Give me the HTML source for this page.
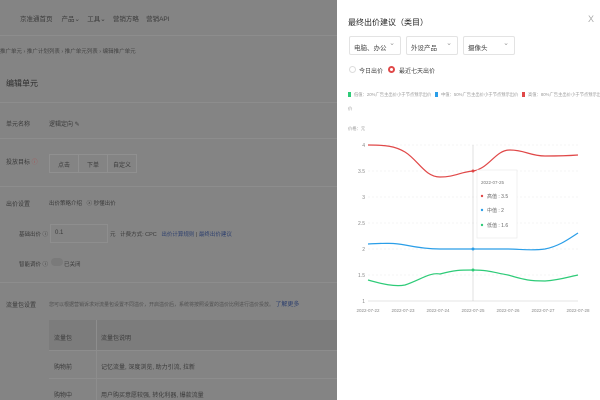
<!DOCTYPE html>
<html><head><meta charset="utf-8"><style>
*{margin:0;padding:0;box-sizing:border-box}
body{width:600px;height:400px;overflow:hidden;position:relative;background:#848484;font-family:"Liberation Sans","Noto Sans CJK SC",sans-serif;font-size:6px;color:#3a3a3a}
.a{position:absolute;white-space:nowrap}
.hl{position:absolute;left:0;width:337px;height:1px;background:#8d8d8d}
.drawer{position:absolute;left:337px;top:0;width:263px;height:400px;background:#fff}
.sel{position:absolute;top:36px;height:19px;border:1px solid #e3e3e3;border-radius:2px;font-size:6.5px;color:#444;padding:5px 0 0 4px}
.sel:after{content:"⌄";position:absolute;right:5px;top:2px;color:#999;font-size:7px}
.lg{font-size:4.3px;color:#999}
</style></head><body>
<div class="a" style="left:20px;top:13px;font-size:6.5px;color:#3b3b3b">京准通首页&nbsp;&nbsp;&nbsp;&nbsp;&nbsp;产品⌄&nbsp;&nbsp;&nbsp;&nbsp;工具⌄&nbsp;&nbsp;&nbsp;&nbsp;营销方略&nbsp;&nbsp;&nbsp;&nbsp;营销API</div>
<div class="hl" style="top:35px"></div>
<div class="a" style="left:0;top:47px;font-size:5.5px;color:#444">推广单元 › 推广计划列表 › 推广单元列表 › 编辑推广单元</div>
<div class="a" style="left:6px;top:78px;font-size:8px;color:#2d2d2d">编辑单元</div>
<div class="hl" style="top:102px"></div>
<div class="a" style="left:6px;top:119px;font-size:6px">单元名称</div>
<div class="a" style="left:49px;top:119px;font-size:6px">逻辑定向 ✎</div>
<div class="hl" style="top:138px"></div>
<div class="a" style="left:6px;top:157px;font-size:6px">投放目标 <span style="color:#a55">ⓘ</span></div>
<div class="a" style="left:49px;top:154px;width:88px;height:19px;border:1px solid #909090;font-size:6px;display:flex"><span style="flex:1;text-align:center;padding-top:5px;border-right:1px solid #909090">点击</span><span style="flex:1;text-align:center;padding-top:5px;border-right:1px solid #909090">下单</span><span style="flex:1;text-align:center;padding-top:5px">自定义</span></div>
<div class="hl" style="top:186px"></div>
<div class="a" style="left:6px;top:199px;font-size:6px">出价设置</div>
<div class="a" style="left:49px;top:199px;font-size:5.5px">出价策略介绍&nbsp;&nbsp;&nbsp;ⓧ 秒懂出价</div>
<div class="a" style="left:19px;top:230px;font-size:5.5px">基础出价 ⓘ</div>
<div class="a" style="left:50px;top:224px;width:58px;height:19px;border:1px solid #8e8e8e;padding:5px 4px;font-size:6px">0.1</div>
<div class="a" style="left:110px;top:230px;font-size:5.5px">元&nbsp;&nbsp;&nbsp;计费方式: CPC&nbsp;&nbsp;&nbsp;<span style="color:#2c3f6e">出价计算规则</span> | <span style="color:#2c3f6e">最终出价建议</span></div>
<div class="a" style="left:19px;top:260px;font-size:5.5px">智能调价 ⓘ</div>
<div class="a" style="left:51px;top:258px;width:12px;height:8px;border-radius:4px;background:#7a7a7a"></div>
<div class="a" style="left:64px;top:260px;font-size:5.5px">已关闭</div>
<div class="hl" style="top:282px"></div>
<div class="a" style="left:6px;top:300px;font-size:6px">流量包设置</div>
<div class="a" style="left:49px;top:299px;font-size:5px;color:#505050">您可以根据营销诉求对流量包设置不同溢价，开启溢价后，系统将按照设置的溢价比例进行溢价投放。 <span style="color:#2c3f6e;font-size:6px">了解更多</span></div>
<div class="a" style="left:49px;top:320px;width:288px;height:30px;background:#7c7c7c"></div>
<div class="a" style="left:54px;top:333px;font-size:6px">流量包</div>
<div class="a" style="left:101px;top:333px;font-size:6px">流量包说明</div>
<div class="a" style="left:49px;top:350px;width:288px;height:1px;background:#8d8d8d"></div>
<div class="a" style="left:96px;top:320px;width:1px;height:80px;background:#8d8d8d"></div>
<div class="a" style="left:54px;top:362px;font-size:6px">购物前</div>
<div class="a" style="left:101px;top:362px;font-size:6px">记忆流量, 深度浏览, 助力引流, 拉新</div>
<div class="a" style="left:49px;top:378px;width:288px;height:1px;background:#8d8d8d"></div>
<div class="a" style="left:54px;top:390px;font-size:6px">购物中</div>
<div class="a" style="left:101px;top:390px;font-size:6px">用户购买意愿较强, 转化利器, 爆款流量</div>

<div class="drawer">
<div class="a" style="left:11px;top:17px;font-size:8px;color:#222">最终出价建议（类目）</div>
<div class="a" style="left:251px;top:14px;font-size:9px;color:#aaa">X</div>
<div class="sel" style="left:12px;width:52px">电脑、办公</div>
<div class="sel" style="left:69px;width:52px">外设产品</div>
<div class="sel" style="left:126px;width:52px">摄像头</div>
<div class="a" style="left:12px;top:66px;width:7px;height:7px;border:1px solid #ddd;border-radius:50%"></div>
<div class="a" style="left:22px;top:66px;font-size:6px;color:#444">今日出价</div>
<div class="a" style="left:51px;top:66px;width:7px;height:7px;border:2px solid #e04848;border-radius:50%"></div>
<div class="a" style="left:62px;top:66px;font-size:6px;color:#444">最近七天出价</div>
<div class="a" style="left:11px;top:92px;width:3px;height:5px;background:#2ecb78"></div>
<div class="a lg" style="left:17px;top:92px">低值：20%广告主出价小于节点预示出价</div>
<div class="a" style="left:98px;top:92px;width:3px;height:5px;background:#2a9ee8"></div>
<div class="a lg" style="left:104px;top:92px">中值：50%广告主出价小于节点预示出价</div>
<div class="a" style="left:185px;top:92px;width:3px;height:5px;background:#e04848"></div>
<div class="a lg" style="left:191px;top:92px">高值：80%广告主出价小于节点预示出</div>
<div class="a lg" style="left:11px;top:106px">价</div>
<div class="a lg" style="left:11px;top:126px">价格：元</div>
</div>
<svg class="a" style="left:0;top:0" width="600" height="400" font-family="Liberation Sans" font-size="5" fill="#888">
<g stroke="#eee" stroke-dasharray="2,2" stroke-width="0.6">
<line x1="368" y1="145" x2="578" y2="145"/><line x1="368" y1="171" x2="578" y2="171"/><line x1="368" y1="197" x2="578" y2="197"/><line x1="368" y1="223" x2="578" y2="223"/><line x1="368" y1="249" x2="578" y2="249"/><line x1="368" y1="275" x2="578" y2="275"/>
</g>
<line x1="368" y1="301" x2="578" y2="301" stroke="#ccc" stroke-width="0.6"/>
<line x1="473" y1="145" x2="473" y2="301" stroke="#ccc" stroke-width="0.6"/>
<g text-anchor="end"><text x="365" y="147">4</text><text x="365" y="173">3.5</text><text x="365" y="199">3</text><text x="365" y="225">2.5</text><text x="365" y="251">2</text><text x="365" y="277">1.5</text><text x="365" y="303">1</text></g>
<g text-anchor="middle" font-size="4.5"><text x="368" y="312">2022-07-22</text><text x="403" y="312">2022-07-23</text><text x="438" y="312">2022-07-24</text><text x="473" y="312">2022-07-25</text><text x="508" y="312">2022-07-26</text><text x="543" y="312">2022-07-27</text><text x="578" y="312">2022-07-28</text></g>
<g fill="none" stroke-width="1.2">
<path d="M368 145 C385 145,395 146,405 152 C418 160,425 177,440 177 C455 177,460 172,473 171 C490 168,495 150,510 150 C525 150,530 156,545 156 C560 156,565 156,578 155" stroke="#e04848"/>
<path d="M368 244 C385 243,395 243,405 245 C420 248,430 249,440 249 L508 249 C520 249,530 251,545 249 C560 246,570 238,578 233" stroke="#2a9ee8"/>
<path d="M368 280 C382 284,395 287,405 285 C420 280,430 272,440 274 C455 270,460 270,473 270 C490 270,495 273,508 275 C525 280,530 281,545 281 C560 280,568 277,578 275" stroke="#2ecb78"/>
</g>
<circle cx="473" cy="171" r="1.5" fill="#e04848"/><circle cx="473" cy="249" r="1.5" fill="#2a9ee8"/><circle cx="473" cy="270" r="1.5" fill="#2ecb78"/>
<rect x="477" y="170" width="40" height="68" fill="#fff" stroke="#e8e8e8" stroke-width="0.6"/>
<text x="481" y="184" font-size="4.5" fill="#777">2022-07-25</text>
<circle cx="482" cy="196" r="1.2" fill="#e04848"/><text x="487" y="198" fill="#666">高值 : 3.5</text>
<circle cx="482" cy="210" r="1.2" fill="#2a9ee8"/><text x="487" y="212" fill="#666">中值 : 2</text>
<circle cx="482" cy="225" r="1.2" fill="#2ecb78"/><text x="487" y="227" fill="#666">低值 : 1.6</text>
</svg>
</body></html>
